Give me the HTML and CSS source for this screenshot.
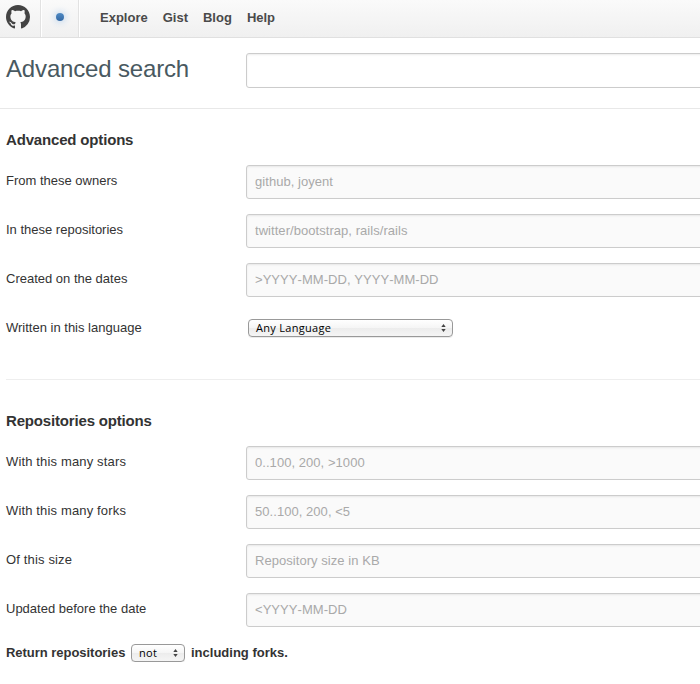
FILE: index.html
```html
<!DOCTYPE html>
<html lang="en">
<head>
<meta charset="utf-8">
<title>Advanced search</title>
<link rel="stylesheet" href="styles.css">
</head>
<body>
<header class="topbar">
  <a class="logo"><svg width="24" height="24" viewBox="0 0 16 16"><path fill="#444" d="M8 0C3.58 0 0 3.58 0 8c0 3.54 2.29 6.53 5.47 7.59.4.07.55-.17.55-.38 0-.19-.01-.82-.01-1.49-2.01.37-2.53-.49-2.69-.94-.09-.23-.48-.94-.82-1.13-.28-.15-.68-.52-.01-.53.63-.01 1.08.58 1.23.82.72 1.21 1.87.87 2.33.66.07-.52.28-.87.51-1.07-1.78-.2-3.64-.89-3.64-3.95 0-.87.31-1.59.82-2.15-.08-.2-.36-1.02.08-2.12 0 0 .67-.21 2.2.82.64-.18 1.32-.27 2-.27s1.36.09 2 .27c1.53-1.04 2.2-.82 2.2-.82.44 1.1.16 1.92.08 2.12.51.56.82 1.27.82 2.15 0 3.07-1.87 3.75-3.65 3.95.29.25.54.73.54 1.48 0 1.07-.01 1.93-.01 2.2 0 .21.15.46.55.38A8.01 8.01 0 0 0 16 8c0-4.42-3.58-8-8-8z"/></svg></a>
  <a class="notice"><span class="dot"></span></a>
  <nav class="nav"><a>Explore</a><a>Gist</a><a>Blog</a><a>Help</a></nav>
</header>
<form>
  <div class="search">
    <h1>Advanced search</h1>
    <input class="field main" type="text">
  </div>
  <section class="options">
    <h2>Advanced options</h2>
    <div class="row"><label>From these owners</label><input class="field" placeholder="github, joyent"></div>
    <div class="row"><label>In these repositories</label><input class="field" placeholder="twitter/bootstrap, rails/rails"></div>
    <div class="row"><label>Created on the dates</label><input class="field" placeholder="&gt;YYYY-MM-DD, YYYY-MM-DD"></div>
    <div class="row"><label>Written in this language</label><span class="select language"><span>Any Language</span><svg width="5" height="8" viewBox="0 0 5 8"><path fill="#444" d="M2.5 0 4.7 3H.3zM.3 5h4.4L2.5 8z"/></svg></span></div>
  </section>
  <section class="options repos">
    <h2>Repositories options</h2>
    <div class="row"><label class="loose">With this many stars</label><input class="field" placeholder="0..100, 200, &gt;1000"></div>
    <div class="row"><label class="loose">With this many forks</label><input class="field" placeholder="50..100, 200, &lt;5"></div>
    <div class="row"><label class="loose">Of this size</label><input class="field" placeholder="Repository size in KB"></div>
    <div class="row"><label>Updated before the date</label><input class="field" placeholder="&lt;YYYY-MM-DD"></div>
    <div class="forks"><span class="before">Return repositories</span><span class="select not"><span>not</span><svg width="5" height="8" viewBox="0 0 5 8"><path fill="#444" d="M2.5 0 4.7 3H.3zM.3 5h4.4L2.5 8z"/></svg></span><span class="after">including forks.</span></div>
  </section>
</form>
</body>
</html>
```
FILE: styles.css
```css
* { box-sizing: border-box; }
body {
  margin: 0;
  overflow: hidden;
  background: #fff;
  color: #333;
  font: 13px/18px "Liberation Sans", Arial, sans-serif;
}
.topbar {
  display: flex;
  height: 38px;
  background: linear-gradient(#fafafa, #f0f0f0);
  border-bottom: 1px solid #e0e0e0;
}
.logo {
  width: 41px;
  padding: 5px 0 0 6px;
  border-right: 1px solid #e2e2e2;
}
.logo svg { display: block; }
.notice {
  display: flex;
  width: 38px;
  align-items: center;
  justify-content: center;
  padding-bottom: 3px;
  border-left: 1px solid #fff;
  border-right: 1px solid #e2e2e2;
}
.dot {
  width: 8px;
  height: 8px;
  border-radius: 50%;
  background: linear-gradient(#4f8ac4, #3369a5);
  box-shadow: 0 0 7px 1px #b9d3ee;
}
.nav {
  display: flex;
  flex: 1;
  gap: 15px;
  padding: 9px 0 0 20px;
  border-left: 1px solid #fff;
  color: #4a4a4a;
  font-weight: bold;
}
.search {
  display: flex;
  height: 71px;
  padding: 15px 0 0 6px;
  border-bottom: 1px solid #e8e8e8;
}
h1 {
  flex: 0 0 240px;
  margin: 0;
  color: #495961;
  font-size: 24px;
  font-weight: normal;
  line-height: 32px;
  letter-spacing: -.16px;
}
.field {
  display: block;
  flex: 0 0 480px;
  height: 34px;
  padding: 0 8px 2px;
  border: 1px solid #ccc;
  border-radius: 3px;
  background: #fafafa;
  box-shadow: inset 0 1px 2px rgba(0, 0, 0, .075);
  font: inherit;
  font-kerning: none;
  letter-spacing: .05px;
}
.main { height: 35px; background: #fff; }
.field::placeholder { color: #a9a9a9; opacity: 1; }
.options { margin-left: 6px; padding-top: 20px; }
.repos { margin-top: 18px; padding-top: 30px; border-top: 1px solid #eee; }
h2 {
  margin: 0 0 14px;
  font-size: 15px;
  line-height: 22px;
  letter-spacing: -.17px;
}
.row { display: flex; height: 49px; }
.row label { flex: 0 0 240px; padding-top: 7px; }
.row .loose { letter-spacing: .15px; }
.select {
  display: flex;
  align-items: center;
  justify-content: space-between;
  height: 18px;
  padding: 0 6px 0 7px;
  border: 1px solid #999;
  border-radius: 4px;
  background: linear-gradient(#fff, #f5f5f5 50%, #ececec 51%, #f5f5f5);
  box-shadow: 0 1px 0 rgba(0, 0, 0, .08);
  color: #000;
  font: 500 11px/16px "Open Sans", sans-serif;
  letter-spacing: .3px;
}
.language { width: 205px; margin: 7px 0 0 2px; }
.forks { display: flex; align-items: center; height: 18px; margin-top: 2px; font-weight: bold; }
.before { width: 119px; letter-spacing: -.03px; white-space: nowrap; }
.not { width: 54px; margin: 0 6px; }
```
